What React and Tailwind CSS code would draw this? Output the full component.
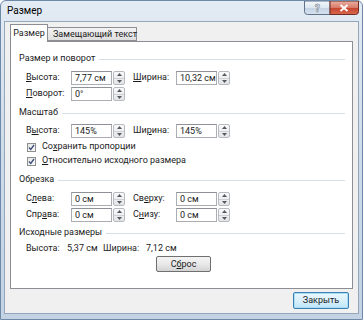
import React from 'react';

// Office 2007 "Размер" picture-size dialog, Vista frame

function U({ children }) {
  return <span className="underline underline-offset-[1px]">{children}</span>;
}

function CaptionButtons() {
  return (
    <svg width="55" height="14" viewBox="0 0 55 14">
      <defs>
        <linearGradient id="helpG" x1="0" y1="0" x2="0" y2="1">
          <stop offset="0" stopColor="#f3f7fb" />
          <stop offset="0.5" stopColor="#dce6f1" />
          <stop offset="0.51" stopColor="#c4d3e4" />
          <stop offset="1" stopColor="#d6e2ef" />
        </linearGradient>
        <linearGradient id="closeG" x1="0" y1="0" x2="0" y2="1">
          <stop offset="0" stopColor="#eab2a4" />
          <stop offset="0.5" stopColor="#d97a68" />
          <stop offset="0.51" stopColor="#c6432e" />
          <stop offset="1" stopColor="#d86a4f" />
        </linearGradient>
      </defs>
      <path d="M0.5 0 V10.5 Q0.5 13.5 3.5 13.5 H26 V0Z" fill="url(#helpG)" stroke="#5f728a" />
      <path d="M26 0 V13.5 H51.5 Q54.5 13.5 54.5 10.5 V0Z" fill="url(#closeG)" stroke="#6e2c22" />
      <text x="13.5" y="10.5" textAnchor="middle" fontFamily="Roboto, sans-serif" fontWeight="bold" fontSize="10" fill="#ffffff" stroke="#3d4d60" strokeWidth="0.4">?</text>
      <path d="M36.5 4 L43.5 10 M43.5 4 L36.5 10" stroke="#ffffff" strokeWidth="1.9" />
    </svg>
  );
}

function Spin() {
  return (
    <div className="ml-[1px] w-[12px] h-[14px] flex flex-col border border-[#b7bac0] rounded-[2px] bg-linear-to-b from-[#fafafa] to-[#e3e4e7]">
      <div className="flex-1 flex items-center justify-center border-b border-[#cfd1d4]">
        <svg width="5" height="3" viewBox="0 0 5 3">
          <path d="M0 3 L2.5 0 L5 3Z" fill="#56595e" />
        </svg>
      </div>
      <div className="flex-1 flex items-center justify-center">
        <svg width="5" height="3" viewBox="0 0 5 3">
          <path d="M0 0 L5 0 L2.5 3Z" fill="#56595e" />
        </svg>
      </div>
    </div>
  );
}

function Field({ value }) {
  return (
    <div className="flex items-center">
      <div className="w-[41px] h-[14px] border border-[#abadb3] border-t-[#8e9197] bg-white pl-[3px] flex items-center leading-none whitespace-nowrap overflow-hidden">
        {value}
      </div>
      <Spin />
    </div>
  );
}

function Row({ label, value, label2, value2, className = '' }) {
  return (
    <div className={`flex items-center h-[14px] pl-[15px] ${className}`}>
      <div className="w-[45px]">{label}</div>
      <Field value={value} />
      {label2 && (
        <>
          <div className="ml-[8px] w-[43px]">{label2}</div>
          <Field value={value2} />
        </>
      )}
    </div>
  );
}

function Header({ children, className = '' }) {
  return (
    <div className={`flex items-center h-[14px] pl-[8px] pr-[7px] ${className}`}>
      <span>{children}</span>
      <div className="flex-1 ml-[4px] h-px bg-[#d5dfe5]" />
    </div>
  );
}

function Check({ children, className = '' }) {
  return (
    <div className={`flex items-center h-[14px] pl-[16px] ${className}`}>
      <div className="w-[9px] h-[9px] border border-[#8f8f8f] bg-linear-to-br from-[#e6e6e6] to-[#fbfbfb] flex items-center justify-center">
        <svg width="7" height="7" viewBox="0 0 7 7">
          <path d="M1 3.5 L2.8 5.5 L6 1" stroke="#3b4c78" strokeWidth="1.3" fill="none" />
        </svg>
      </div>
      <span className="ml-[6px]">{children}</span>
    </div>
  );
}

export default function App() {
  return (
    <div className="w-[363px] h-[320px] flex flex-col rounded-t-[6px] border border-[#6f8aa8] bg-linear-to-b from-[#e3ebf4] via-[#cddbea] to-[#c3d3e4] font-['Roboto',sans-serif] text-[9px] text-[#1b1b1b] whitespace-nowrap">
      {/* title bar */}
      <div className="h-[20px] shrink-0 flex items-start">
        <div className="flex-1 pl-[6px] pt-[5px] text-[10px] text-black leading-none">Размер</div>
        <div className="mr-[3px] flex">
          <CaptionButtons />
        </div>
      </div>

      {/* client area */}
      <div className="flex-1 mx-[3px] mb-[5px] bg-[#f0f0f0] border border-[#94a6ba] flex flex-col px-[5px] pt-[3px]">
        {/* tabs */}
        <div className="h-[16px] flex items-end relative z-10">
          <div className="w-[38px] h-[18px] -mb-[1px] bg-white border border-[#8c8e94] border-b-0 flex items-center justify-center leading-none">
            Размер
          </div>
          <div className="w-[89px] h-[14px] bg-linear-to-b from-[#f3f3f3] to-[#dedede] border border-l-0 border-[#8c8e94] flex items-center pl-[5px] leading-none">
            Замещающий текст
          </div>
        </div>

        {/* panel */}
        <div className="h-[248px] bg-white border border-[#8c8e94] flex flex-col">
          <Header className="mt-[10px]">Размер и поворот</Header>
          <Row
            className="mt-[5px]"
            label={<><U>В</U>ысота:</>}
            value="7,77 см"
            label2={<><U>Ш</U>ирина:</>}
            value2="10,32 см"
          />
          <Row className="mt-[2px]" label={<><U>П</U>оворот:</>} value="0°" />

          <Header className="mt-[5px]">Масштаб</Header>
          <Row
            className="mt-[4px]"
            label={<>В<U>ы</U>сота:</>}
            value="145%"
            label2={<>Ши<U>р</U>ина:</>}
            value2="145%"
          />
          <Check className="mt-[2px]">Со<U>х</U>ранить пропорции</Check>
          <Check><U>О</U>тносительно исходного размера</Check>

          <Header className="mt-[5px]">Обрезка</Header>
          <Row
            className="mt-[5px]"
            label={<>С<U>л</U>ева:</>}
            value="0 см"
            label2={<>Св<U>е</U>рху:</>}
            value2="0 см"
          />
          <Row
            className="mt-[2px]"
            label={<>Спр<U>а</U>ва:</>}
            value="0 см"
            label2={<>С<U>н</U>изу:</>}
            value2="0 см"
          />

          <Header className="mt-[4px]">Исходные размеры</Header>
          <div className="mt-[3px] h-[12px] flex items-center pl-[15px]">
            <span className="w-[41px]">Высота:</span>
            <span className="w-[36px]">5,37 см</span>
            <span className="w-[43px]">Ширина:</span>
            <span>7,12 см</span>
          </div>
          <div className="mt-[1px] pl-[145px]">
            <div className="w-[55px] h-[16px] rounded-[2px] border border-[#707070] bg-linear-to-b from-[#f4f4f4] via-[#e9e9e9] to-[#d3d3d3] flex items-center justify-center leading-none">
              С<U>б</U>рос
            </div>
          </div>
        </div>

        {/* footer */}
        <div className="mt-[3px] flex justify-end pr-[4px]">
          <div className="w-[56px] h-[17px] rounded-[2px] border border-[#3c7fb1] bg-linear-to-b from-[#eaf6fd] via-[#d9f0fc] to-[#bee6fd] shadow-[inset_0_0_0_1px_#a9dcf6] flex items-center justify-center leading-none">
            Закрыть
          </div>
        </div>
      </div>
    </div>
  );
}
